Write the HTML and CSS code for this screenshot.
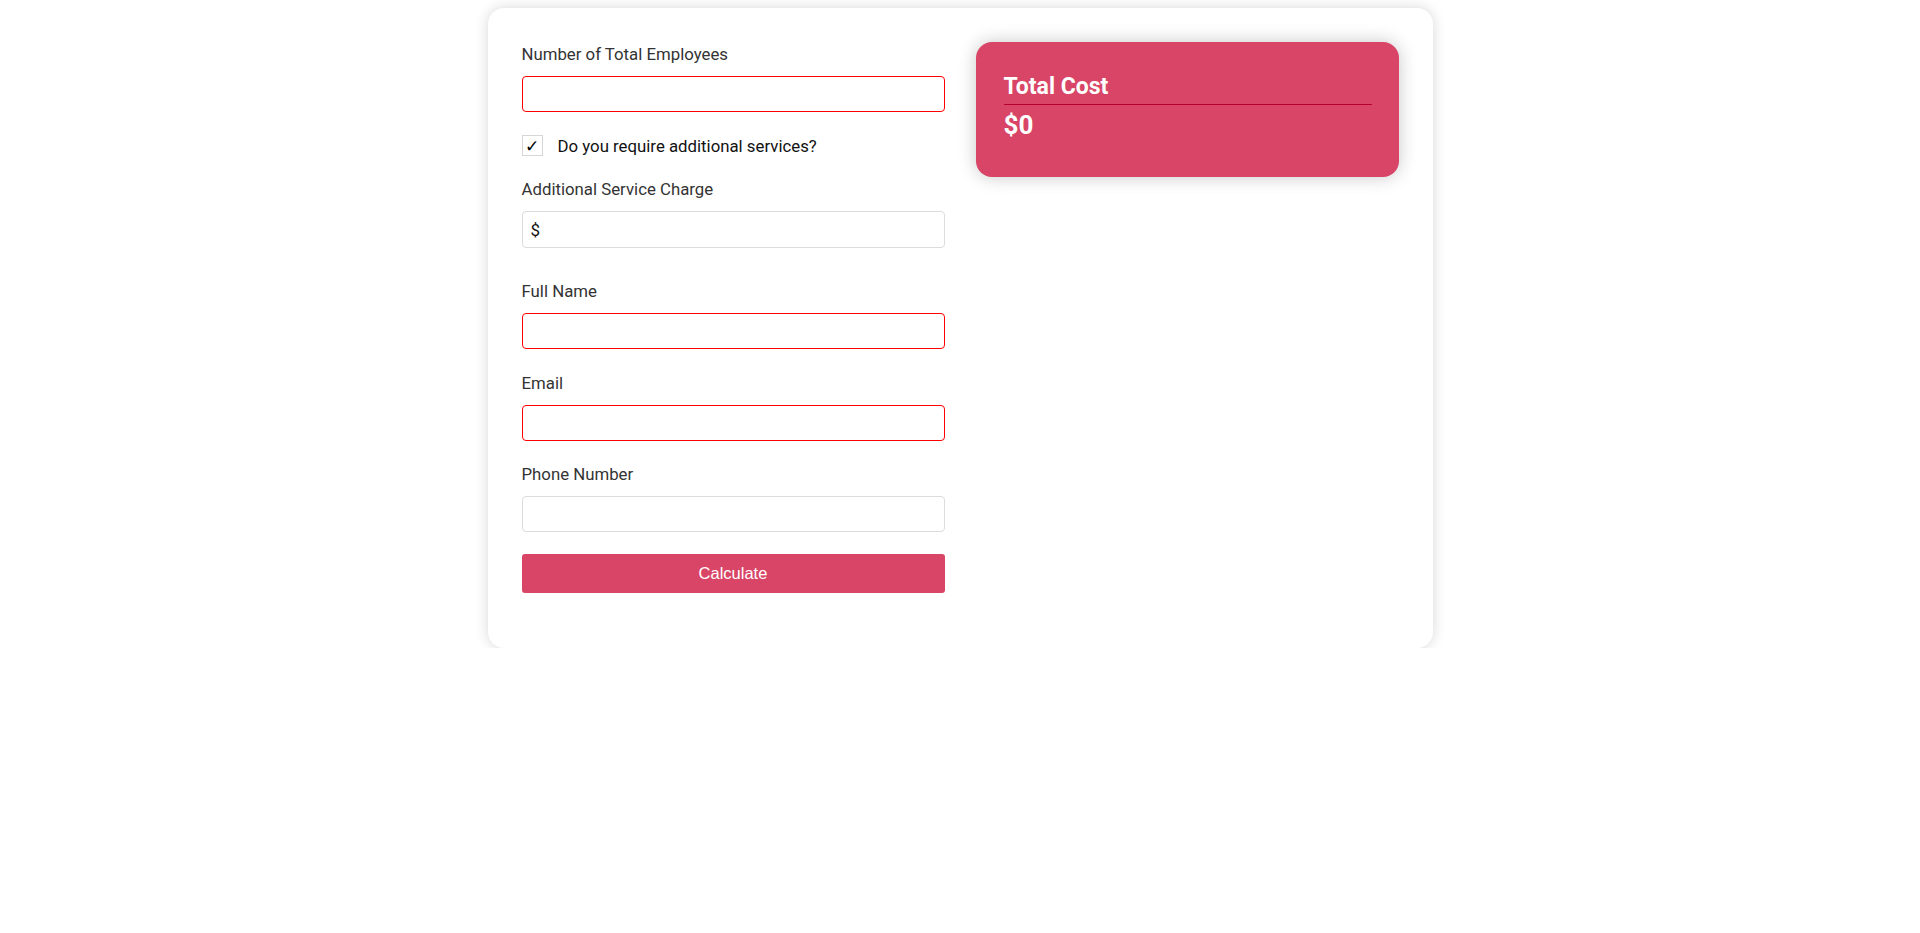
FILE: index.html
```html
<!DOCTYPE html>
<html lang="en">
<head>
<meta charset="utf-8">
<title>Cost Calculator</title>
<link rel="stylesheet" href="styles.css">
</head>
<body>
<main class="card">
  <form class="form-col">
    <div class="field">
      <label class="label">Number of Total Employees</label>
      <input class="input invalid" type="text">
    </div>
    <div class="check-row">
      <span class="checkbox">✓</span>
      <span class="check-text">Do you require additional services?</span>
    </div>
    <div class="field">
      <label class="label">Additional Service Charge</label>
      <div class="input prefix">$</div>
    </div>
    <div class="field wide-gap">
      <label class="label">Full Name</label>
      <input class="input invalid" type="text">
    </div>
    <div class="field">
      <label class="label">Email</label>
      <input class="input invalid" type="text">
    </div>
    <div class="field">
      <label class="label">Phone Number</label>
      <input class="input" type="text">
    </div>
    <button class="btn" type="button">Calculate</button>
  </form>
  <aside class="result-col">
    <div class="result">
      <div class="result-title">Total Cost</div>
      <div class="result-value">$0</div>
    </div>
  </aside>
</main>
</body>
</html>
```

FILE: styles.css
```css
* { box-sizing: border-box; }
html, body { margin: 0; padding: 0; background: #fff; }
body {
  font-family: Roboto, "Noto Sans", sans-serif;
  padding-top: 8px;
}
.card {
  width: 945px;
  margin: 0 auto;
  background: #fff;
  border-radius: 16px;
  box-shadow: 0 0 14px rgba(0,0,0,0.16);
  padding: 34px 34px 55px 34px;
  display: flex;
  gap: 31px;
  align-items: flex-start;
}
.form-col {
  width: 423px;
  display: flex;
  flex-direction: column;
}
.result-col { width: 423px; }
.field { display: flex; flex-direction: column; margin-bottom: 21.5px; }
.field.wide-gap { margin-top: 9.5px; }
.label {
  font-size: 16.8px;
  line-height: 25.5px;
  color: #333;
  margin-bottom: 8.5px;
}
.input {
  height: 36px;
  width: 100%;
  border: 1px solid #dcdcdc;
  border-radius: 4px;
  background: #fff;
  font-family: Roboto, sans-serif;
  font-size: 17px;
  padding: 0 8px;
  outline: none;
}
.input.invalid { border-color: #ff0000; }
.input.prefix {
  display: flex;
  align-items: center;
  color: #111;
  height: 37px;
}
.check-row {
  display: flex;
  align-items: center;
  margin-top: 1.5px;
  margin-bottom: 21px;
  height: 21px;
}
.checkbox {
  width: 21px;
  height: 21px;
  border: 1px solid #d6d6d6;
  display: flex;
  align-items: center;
  justify-content: center;
  font-family: "DejaVu Sans", sans-serif;
  font-size: 17px;
  font-weight: 700;
  color: #000;
  margin-right: 15px;
}
.check-text {
  font-size: 16.8px;
  color: #111;
}
.btn {
  margin-top: 0.5px;
  height: 39px;
  width: 100%;
  border: none;
  border-radius: 3px;
  background: #d84566;
  color: #fff;
  font-family: "Liberation Sans", Arial, sans-serif;
  font-size: 16.5px;
  cursor: pointer;
}
.result {
  background: #d84566;
  border-radius: 16px;
  box-shadow: 0 0 18px rgba(0,0,0,0.22);
  padding: 31px 27px 0 28px;
  color: #fff;
  height: 135px;
}
.result-title {
  font-size: 23px;
  font-weight: 700;
  line-height: 28px;
  padding-bottom: 3px;
  border-bottom: 1px solid #b8002f;
}
.result-value {
  font-size: 26px;
  font-weight: 700;
  line-height: 32px;
  margin-top: 4px;
}
```
